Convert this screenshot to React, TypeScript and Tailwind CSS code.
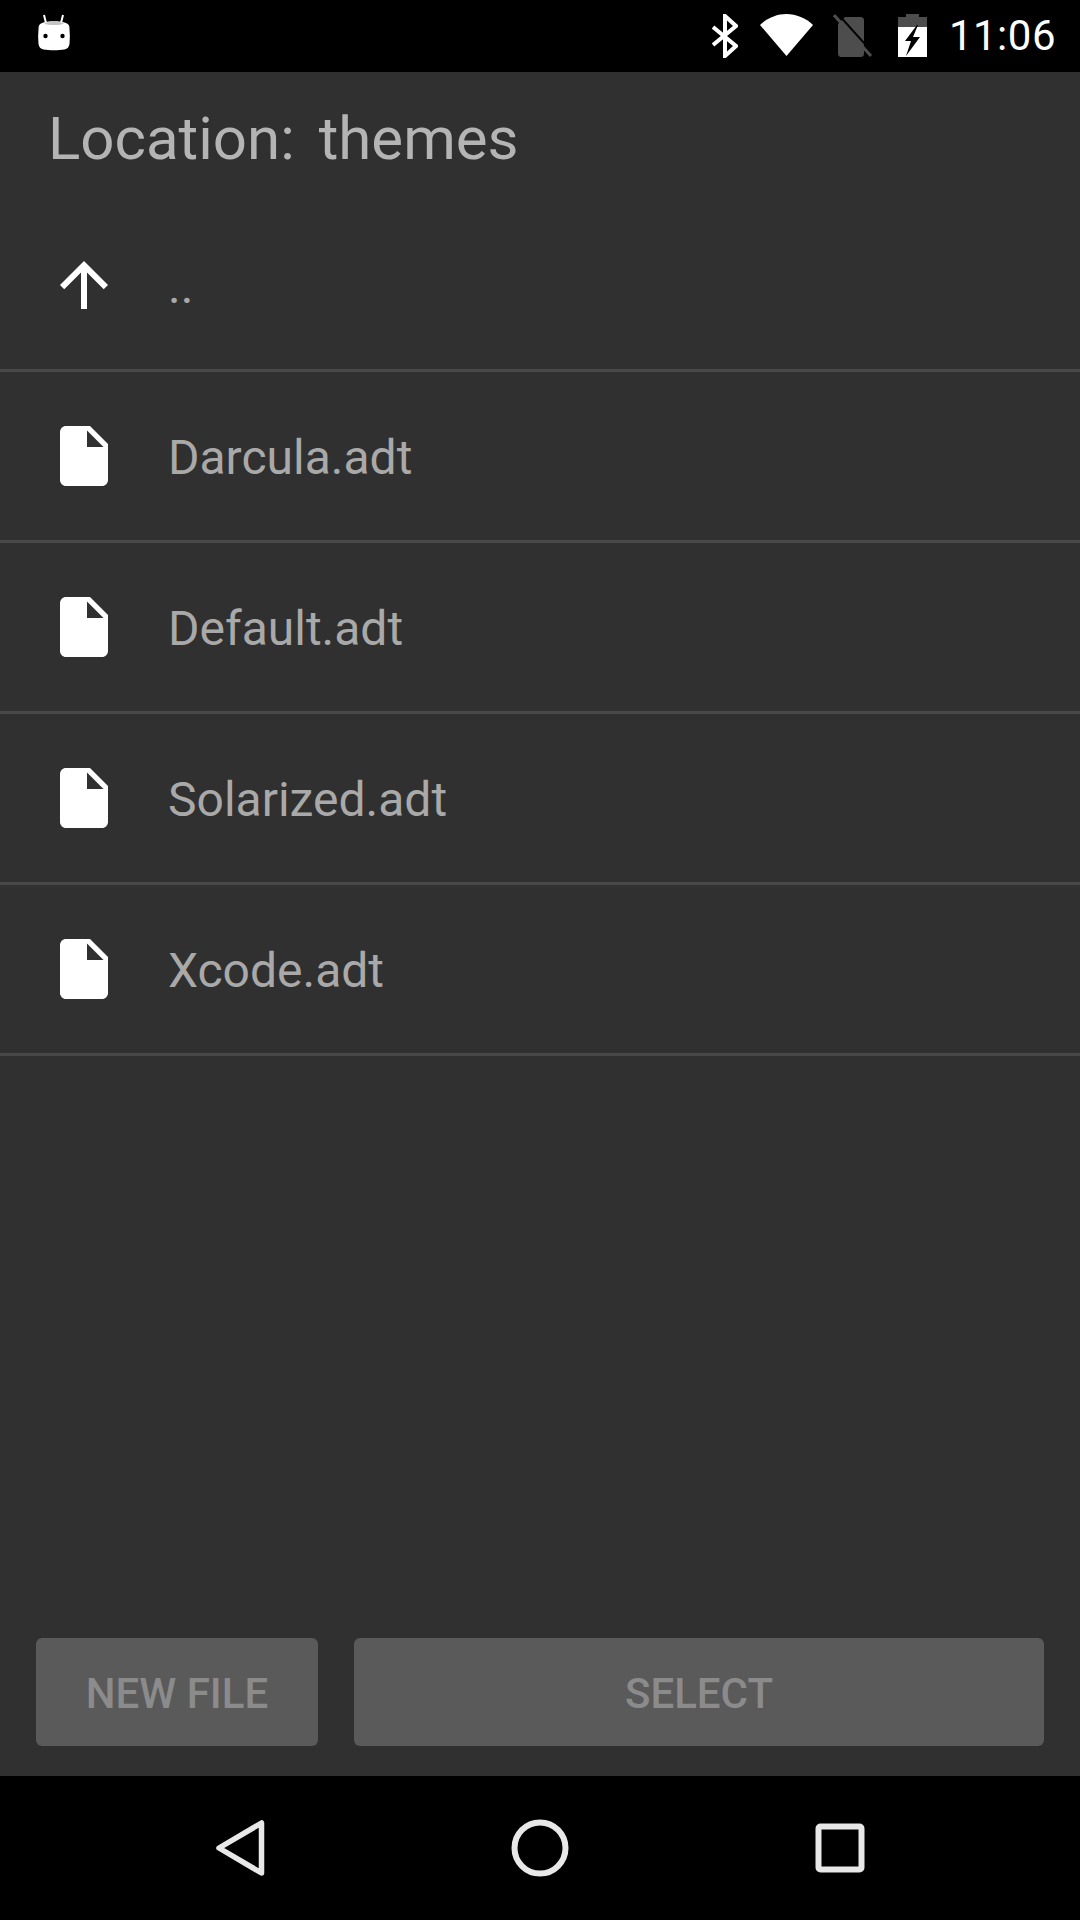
const FileIcon = () => (
  <svg width="72" height="72" viewBox="0 0 24 24" className="shrink-0">
    <path fill="#fff" d="M6 2c-1.100 0-2 .9-2 2v16c0 1.100.9 2 2 2h12c1.100 0 2-.9 2-2V8l-6-6H6z" />
    <path fill="#303030" d="M13 3.500V9h5.500z" />
  </svg>
);

const UpIcon = () => (
  <svg width="72" height="72" viewBox="0 0 24 24" className="shrink-0">
    <path fill="#fff" d="M4 12l1.410 1.410L11 7.830V20h2V7.830l5.580 5.590L20 12l-8-8-8 8z" />
  </svg>
);

const Row = ({ name, up }: { name: string; up?: boolean }) => (
  <div className="h-[171px] flex items-center border-b-[3px] border-[#484848] pl-[48px]">
    {up ? <UpIcon /> : <FileIcon />}
    <span className="ml-[48px] pt-[3px] text-[48px] leading-none text-[#a9a9a9]">{name}</span>
  </div>
);

export default function App() {
  return (
    <div className="w-[1080px] h-[1920px] flex flex-col bg-black overflow-hidden font-['Roboto',sans-serif]">
      <div className="h-[72px] shrink-0 flex items-center bg-black">
        <svg width="36" height="42" viewBox="0 0 36 42" className="ml-[36px] mt-[-2px]">
          <path d="M8 1l2.500 10M27 1l-2.500 10" stroke="#fff" strokeWidth="2" />
          <path fill="#fff" d="M6 9C11 6.500 25 6.500 30 9c3 1 3.500 3 3.500 6 .5 5 .5 10 0 15-.5 3-2 5-5 5.500-6 1-15 1-21 0-3-.5-4.500-2.500-5-5.500-.5-5-.5-10 0-15C2.500 12 3 10 6 9z" />
          <path fill="#c4c4c4" d="M8 9.500C12 7 24 7 28 9.500 24 11.500 12 11.500 8 9.500z" />
          <circle cx="9.500" cy="22" r="2.200" fill="#000" />
          <circle cx="26.500" cy="22" r="2.200" fill="#000" />
        </svg>
        <div className="flex-1" />
        <svg width="26" height="44" viewBox="0 0 26 44" className="mr-[22px]">
          <path d="M1 13l23 19-11 10V2l11 10L1 31" fill="none" stroke="#fff" strokeWidth="4" />
        </svg>
        <svg width="53" height="42" viewBox="0 0 53 42" className="mr-[20px] mt-[-2px]">
          <path fill="#fff" d="M26.500 42L0 11C7 4 17 0 26.500 0S46 4 53 11z" />
        </svg>
        <svg width="40" height="44" viewBox="0 0 40 44" className="mr-[25px]">
          <path fill="#4d4d4d" d="M12 3h15c3 0 4 1 4 4v32c0 3-1 4-4 4H9c-3 0-4-1-4-4V10z" />
          <path d="M1 1l37 41" stroke="#000" strokeWidth="2" transform="translate(3 -2)" />
          <path d="M1 1l37 41" stroke="#4d4d4d" strokeWidth="3" />
        </svg>
        <svg width="29" height="44" viewBox="0 0 29 44" className="mr-[22px]">
          <path fill="#4d4d4d" d="M8 0h13v3h8v11H0V3h8z" />
          <path fill="#fff" d="M0 13h29v30H0z" />
          <path fill="#000" d="M19 11L7 27h6L8 42l14-19h-7l5-12z" />
        </svg>
        <span className="mr-[24px] text-[42px] leading-none text-white tracking-[0.5px]">11:06</span>
      </div>
      <div className="flex-1 flex flex-col bg-[#303030]">
        <div className="h-[129px] flex items-center pl-[48px] pt-[5px] shrink-0 text-[60px] leading-none text-[#b4b4b4]">
          <span>Location:</span>
          <span className="ml-[24px]">themes</span>
        </div>
        <Row name=".." up />
        <Row name="Darcula.adt" />
        <Row name="Default.adt" />
        <Row name="Solarized.adt" />
        <Row name="Xcode.adt" />
        <div className="flex-1" />
        <div className="flex gap-[36px] px-[36px] pb-[30px]">
          <div className="w-[282px] h-[108px] rounded-[6px] bg-[#5a5a5b] flex items-center justify-center pt-[3px] text-[42px] font-medium text-[#8b8b8c]">NEW FILE</div>
          <div className="flex-1 h-[108px] rounded-[6px] bg-[#5a5a5b] flex items-center justify-center pt-[3px] text-[42px] font-medium text-[#8b8b8c]">SELECT</div>
        </div>
      </div>
      <div className="h-[144px] shrink-0 bg-black flex items-center justify-center gap-[240px]">
        <svg width="60" height="64" viewBox="0 0 60 64">
          <path d="M51.500 7v50L9 32z" fill="none" stroke="#e8e8e8" strokeWidth="5.500" strokeLinejoin="round" />
        </svg>
        <svg width="60" height="60" viewBox="0 0 60 60">
          <circle cx="30" cy="30" r="25.500" fill="none" stroke="#e8e8e8" strokeWidth="6" />
        </svg>
        <svg width="60" height="60" viewBox="0 0 60 60">
          <rect x="8.500" y="8.500" width="43" height="43" rx="2" fill="none" stroke="#e8e8e8" strokeWidth="6" />
        </svg>
      </div>
    </div>
  );
}
